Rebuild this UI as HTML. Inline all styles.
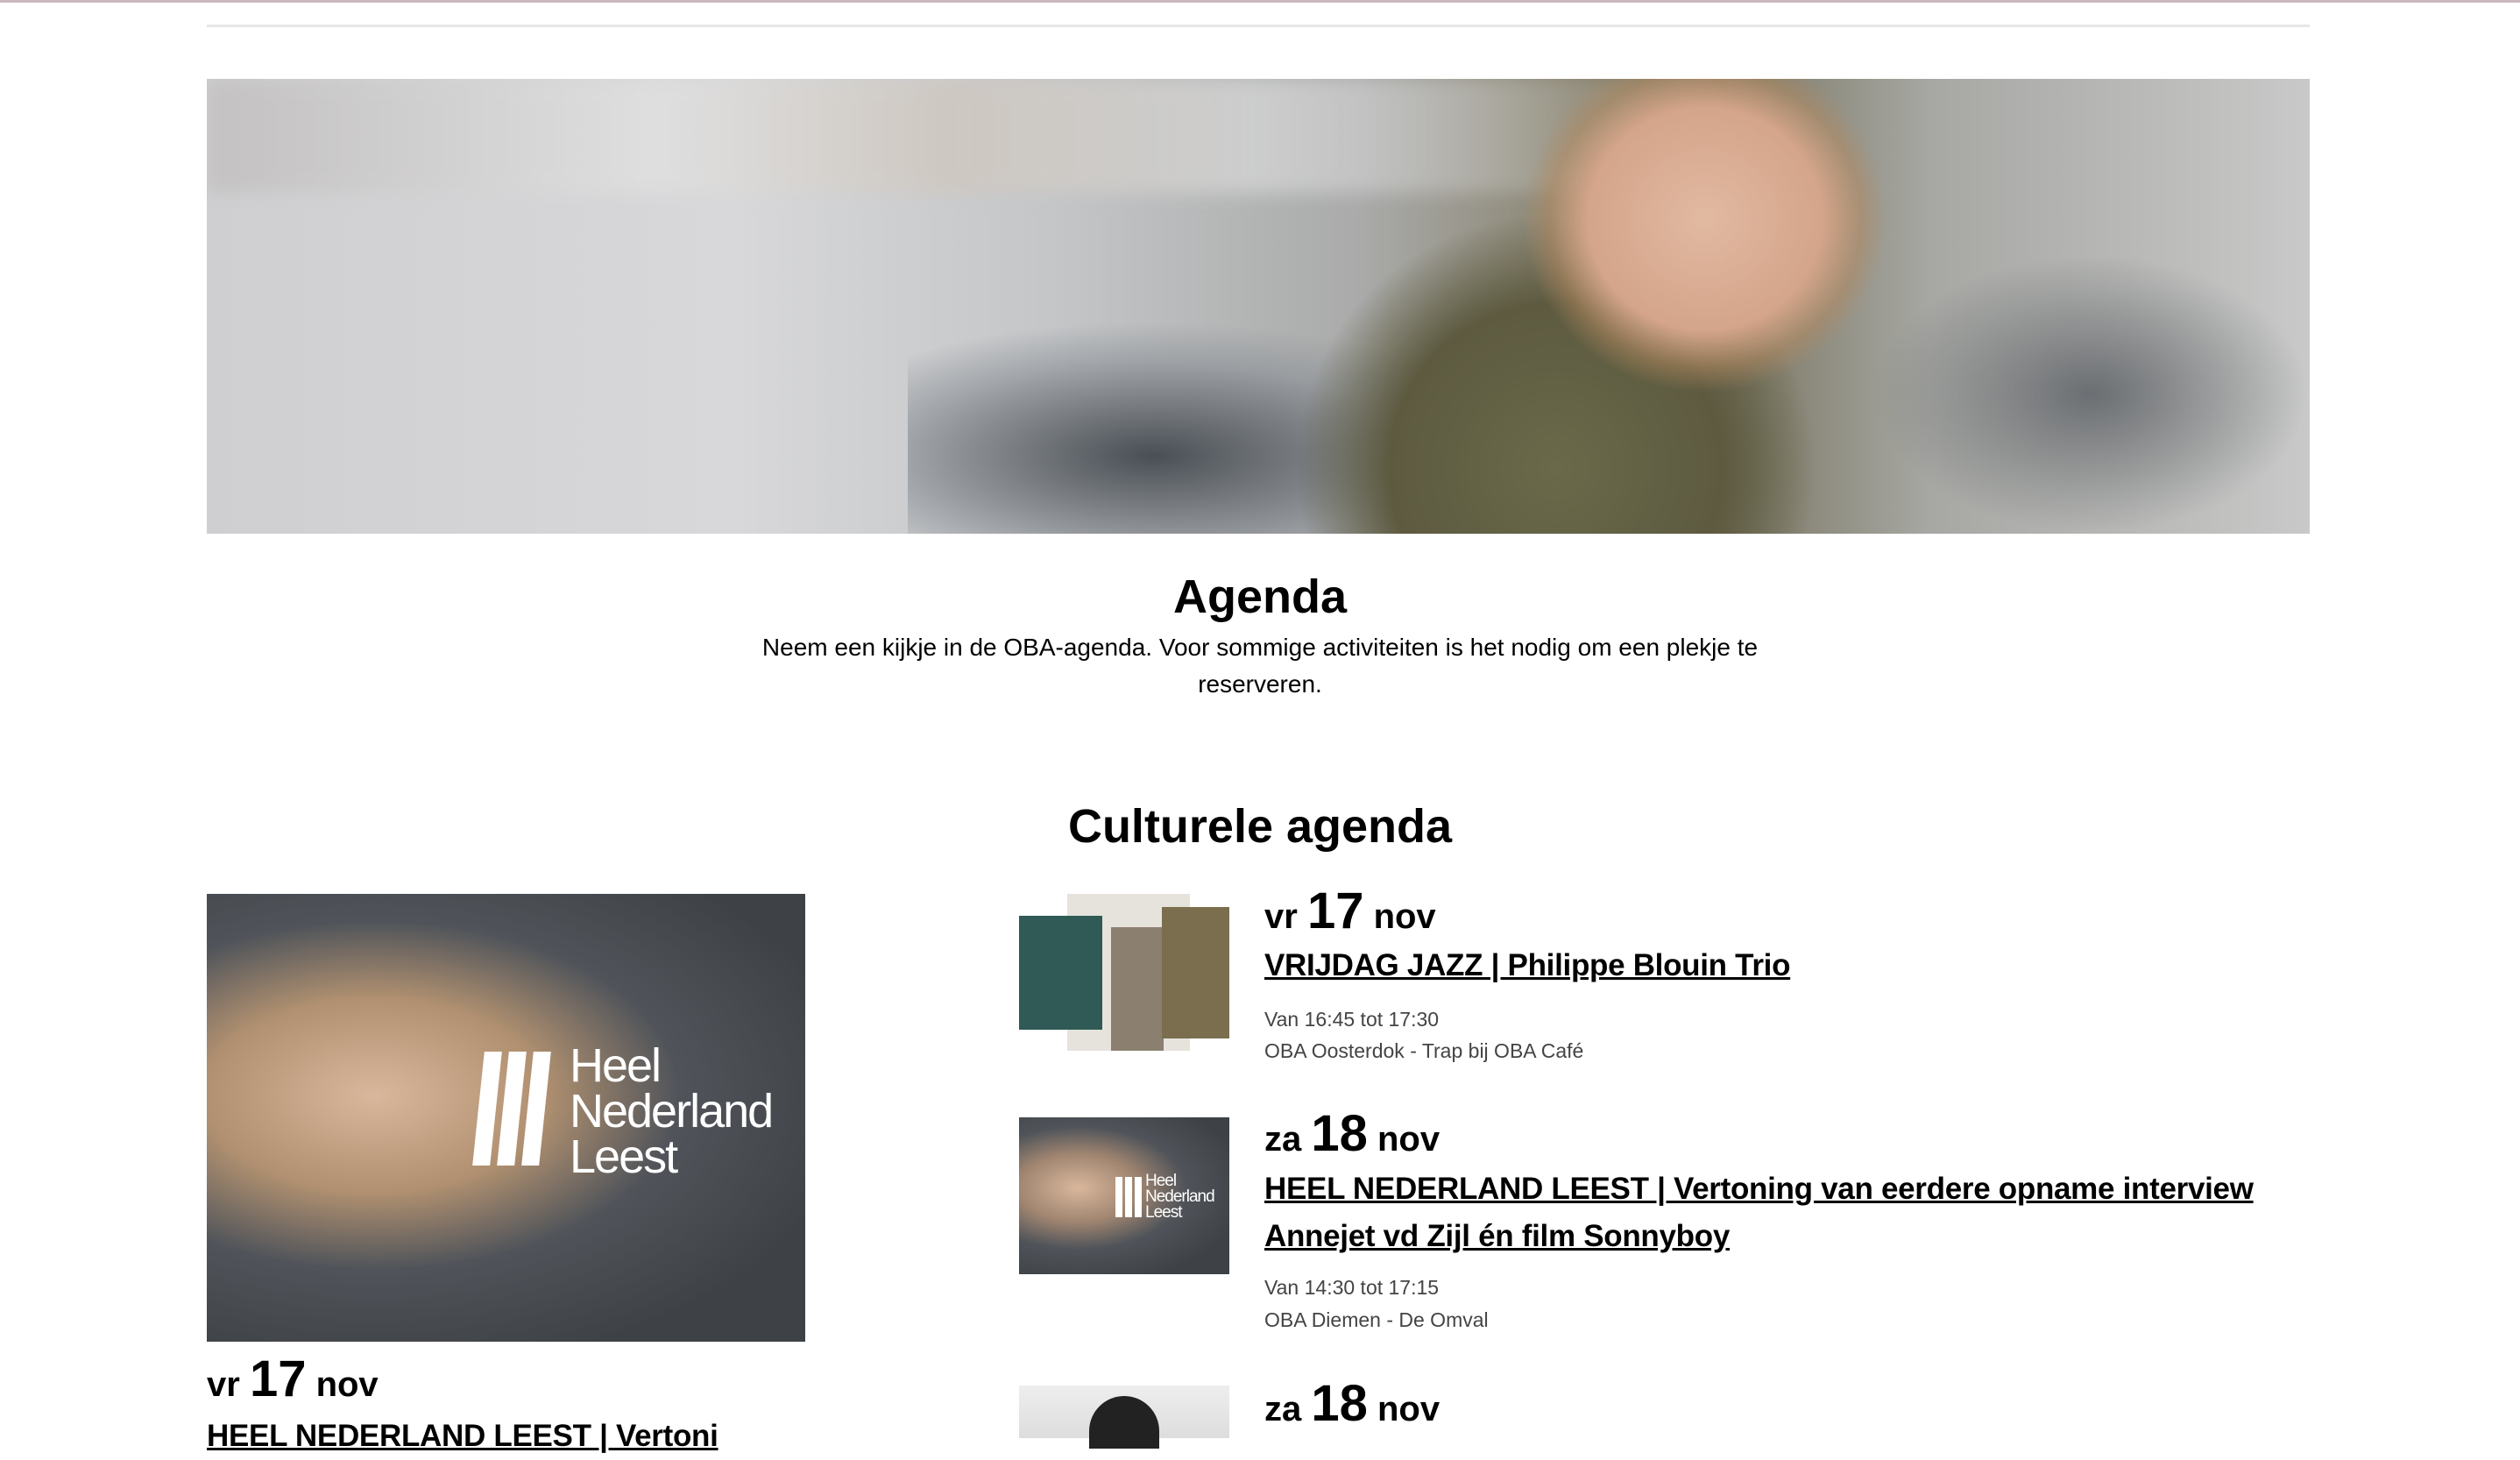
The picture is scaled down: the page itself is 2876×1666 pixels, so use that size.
<!DOCTYPE html>
<html><head><meta charset="utf-8"><style>
*{margin:0;padding:0;box-sizing:border-box}
body{width:2876px;height:1632px;overflow:hidden;background:#fff;font-family:"Liberation Sans",sans-serif;color:#000;position:relative}
.a{position:absolute}
.date{font-size:40px;font-weight:bold;white-space:nowrap}
.date b{font-size:58px}
.title{font-size:35px;font-weight:bold;text-decoration:underline;line-height:54px;letter-spacing:-0.3px}
.meta{font-size:23px;color:#444;line-height:36px}
</style></head><body>
<div class="a" style="left:0;top:0;width:2876px;height:3px;background:#c9b6be"></div>
<div class="a" style="left:236px;top:28px;width:2400px;height:3px;background:#e6e6e6"></div>
<div class="a" style="left:236px;top:90px;width:2400px;height:519px;overflow:hidden;background:linear-gradient(90deg,#cfcfd1 0%,#d8d8da 25%,#c4c6c8 40%,#a9aaa9 55%,#8a8470 65%,#7a7560 72%,#a7a8a4 82%,#c8c9c8 100%)">
 <div class="a" style="left:0;top:0;width:1700px;height:130px;background:linear-gradient(90deg,#bfbcbc,#e2e2e2 30%,#cfc6bc 50%,#d8d8d8 70%,rgba(190,190,190,0) 100%);opacity:.7;filter:blur(10px)"></div>
 <div class="a" style="left:800px;top:280px;width:700px;height:300px;background:radial-gradient(ellipse at 40% 50%,#4a4f55,rgba(138,143,149,.6) 50%,rgba(200,200,200,0) 72%)"></div>
 <div class="a" style="left:1240px;top:150px;width:600px;height:420px;background:radial-gradient(ellipse at 50% 70%,#6a6a4a,#5d5a40 45%,rgba(93,90,64,0) 70%)"></div>
 <div class="a" style="left:1500px;top:-40px;width:420px;height:400px;background:radial-gradient(ellipse at 50% 50%,#e2b9a2,#d4a58a 45%,rgba(181,138,96,.5) 60%,rgba(181,138,96,0) 70%)"></div>
 <div class="a" style="left:1900px;top:200px;width:500px;height:319px;background:radial-gradient(ellipse,#6b6e72,rgba(107,110,114,0) 70%)"></div>
</div>
<div class="a" style="left:0;width:2876px;top:650px;text-align:center;font-size:54px;font-weight:bold">Agenda</div>
<div class="a" style="left:838px;width:1200px;top:718px;text-align:center;font-size:28px;line-height:42px">Neem een kijkje in de OBA-agenda. Voor sommige activiteiten is het nodig om een plekje te reserveren.</div>
<div class="a" style="left:0;width:2876px;top:912px;text-align:center;font-size:54px;font-weight:bold">Culturele agenda</div>

<div class="a" style="left:236px;top:1020px;width:683px;height:511px;background:radial-gradient(ellipse at 28% 45%,#d9b79c,#b09070 28%,#50545a 50%,#3e4246 80%)">
 <div class="a" style="left:310px;top:180px;width:20px;height:130px;background:#fff;transform:skewX(-6deg)"></div>
 <div class="a" style="left:338px;top:180px;width:20px;height:130px;background:#fff;transform:skewX(-6deg)"></div>
 <div class="a" style="left:366px;top:180px;width:20px;height:130px;background:#fff;transform:skewX(-6deg)"></div>
 <div class="a" style="left:414px;top:170px;color:#fff;font-size:54px;line-height:52px;letter-spacing:-2px">Heel<br>Nederland<br>Leest</div>
</div>
<div class="a date" style="left:236px;top:1540px">vr <b>17</b> nov</div>
<div class="a title" style="left:236px;top:1612px">HEEL NEDERLAND LEEST | Vertoni</div>

<div class="a" style="left:1163px;top:1020px;width:240px;height:179px">
 <div class="a" style="left:55px;top:0;width:140px;height:179px;background:#e6e3dd"></div>
 <div class="a" style="left:0;top:25px;width:95px;height:130px;background:#2f5a55"></div>
 <div class="a" style="left:105px;top:38px;width:60px;height:141px;background:#8b7f70"></div>
 <div class="a" style="left:163px;top:15px;width:77px;height:150px;background:#7a6e4e"></div>
</div>
<div class="a date" style="left:1443px;top:1006px">vr <b>17</b> nov</div>
<div class="a title" style="left:1443px;top:1075px">VRIJDAG JAZZ | Philippe Blouin Trio</div>
<div class="a meta" style="left:1443px;top:1145px">Van 16:45 tot 17:30</div>
<div class="a meta" style="left:1443px;top:1181px">OBA Oosterdok - Trap bij OBA Café</div>

<div class="a" style="left:1163px;top:1275px;width:240px;height:179px;background:radial-gradient(ellipse at 28% 45%,#d9b79c,#a08570 28%,#50545a 50%,#3e4246 80%)">
 <div class="a" style="left:110px;top:68px;width:8px;height:46px;background:#fff"></div>
 <div class="a" style="left:121px;top:68px;width:8px;height:46px;background:#fff"></div>
 <div class="a" style="left:132px;top:68px;width:8px;height:46px;background:#fff"></div>
 <div class="a" style="left:144px;top:64px;color:#fff;font-size:19px;line-height:18px;letter-spacing:-1px">Heel<br>Nederland<br>Leest</div>
</div>
<div class="a date" style="left:1443px;top:1260px">za <b>18</b> nov</div>
<div class="a title" style="left:1443px;top:1330px;width:1200px">HEEL NEDERLAND LEEST | Vertoning van eerdere opname interview Annejet vd Zijl én film Sonnyboy</div>
<div class="a meta" style="left:1443px;top:1451px">Van 14:30 tot 17:15</div>
<div class="a meta" style="left:1443px;top:1488px">OBA Diemen - De Omval</div>

<div class="a" style="left:1163px;top:1581px;width:240px;height:60px;background:linear-gradient(180deg,#eee,#ddd)">
 <div class="a" style="left:80px;top:12px;width:80px;height:60px;border-radius:40px 40px 0 0;background:#222"></div>
</div>
<div class="a date" style="left:1443px;top:1568px">za <b>18</b> nov</div>
</body></html>
